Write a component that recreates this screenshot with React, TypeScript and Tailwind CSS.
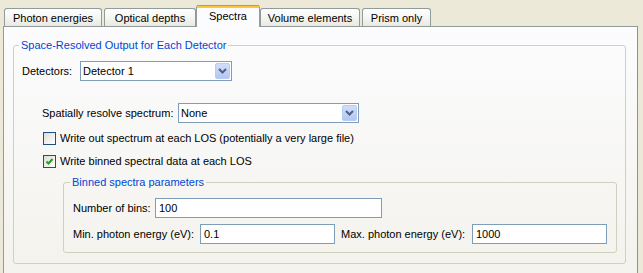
import React from "react";

function Tab({ label, className }: { label: string; className: string }) {
  return (
    <div
      className={`flex h-[18px] items-center justify-center rounded-t-[3px] border border-b-0 border-[#919b9c] bg-gradient-to-b from-[#fefefe] via-[#f6f6f2] to-[#e9e8e0] ${className}`}
    >
      {label}
    </div>
  );
}

function Chevron() {
  return (
    <svg width="9" height="6" viewBox="0 0 9 6">
      <path d="M1 1 L4.5 4.5 L8 1" fill="none" stroke="#4d6185" strokeWidth="2" />
    </svg>
  );
}

function Combo({ value, className }: { value: string; className: string }) {
  return (
    <div className={`flex h-[20px] items-stretch border border-[#7f9db9] bg-white ${className}`}>
      <div className="flex flex-1 items-center pl-[2px]">{value}</div>
      <div className="m-px flex w-[15px] items-center justify-center rounded-[2px] border border-[#b9cbf3] bg-gradient-to-b from-[#d2ddf9] to-[#b4c7f3]">
        <Chevron />
      </div>
    </div>
  );
}

function TextBox({ value, className }: { value: string; className: string }) {
  return (
    <div className={`flex h-[20px] items-center border border-[#7f9db9] bg-white pl-[3px] ${className}`}>
      {value}
    </div>
  );
}

function CheckBox({ checked }: { checked: boolean }) {
  return (
    <div className="flex h-[13px] w-[13px] items-center justify-center border border-[#1c5180] bg-gradient-to-br from-[#dcdcd7] to-[#ffffff]">
      {checked && (
        <svg width="9" height="9" viewBox="0 0 9 9">
          <path d="M1.5 4.5 L3.5 6.5 L7.5 2" fill="none" stroke="#21a121" strokeWidth="2" />
        </svg>
      )}
    </div>
  );
}

export default function App() {
  return (
    <div className="h-[273px] w-[643px] overflow-hidden bg-[#ece9d8] text-[11px] leading-[14px] text-black [font-family:'Liberation_Sans',Arial,sans-serif]">
      {/* tab strip */}
      <div className="flex h-[26px] items-end">
        <Tab label="Photon energies" className="ml-[4px] w-[98px]" />
        <Tab label="Optical depths" className="ml-[2px] w-[92px]" />
        <div className="relative z-10 -mb-px flex h-[22px] w-[64px] flex-col rounded-t-[3px] border-x border-[#919b9c] bg-[#fcfcfe]">
          <div className="h-px rounded-t-[3px] bg-[#e68b2c]" />
          <div className="h-[2px] bg-[#ffc73c]" />
          <div className="flex flex-1 items-center justify-center pb-[3px]">Spectra</div>
        </div>
        <Tab label="Volume elements" className="w-[100px]" />
        <Tab label="Prism only" className="ml-[2px] w-[69px]" />
      </div>

      {/* tab body */}
      <div className="ml-[3px] h-[260px] w-[635px] border border-[#919b9c] border-r-[#8f9293] bg-gradient-to-b from-[#fcfcfe] to-[#f3f2ec] pl-[9px] pt-[11px]">
        <fieldset className="w-[613px] rounded-[3px] border border-[#d0d0bf] pb-[10px] pl-[8px]">
          <legend className="-ml-[3px] px-[2px] text-[#0046d5]">Space-Resolved Output for Each Detector</legend>

          <div className="mt-[9px] flex h-[20px] items-center">
            <span className="w-[58px]">Detectors:</span>
            <Combo value="Detector 1" className="w-[152px]" />
          </div>

          <div className="ml-[20px] mt-[22px] flex h-[20px] items-center">
            <span className="w-[136px]">Spatially resolve spectrum:</span>
            <Combo value="None" className="w-[181px]" />
          </div>

          <div className="ml-[21px] mt-[7px] flex h-[16px] items-center gap-[4px]">
            <CheckBox checked={false} />
            <span>Write out spectrum at each LOS (potentially a very large file)</span>
          </div>

          <div className="ml-[21px] mt-[7px] flex h-[16px] items-center gap-[4px]">
            <CheckBox checked={true} />
            <span>Write binned spectral data at each LOS</span>
          </div>

          <fieldset className="ml-[41px] mt-[6px] w-[554px] rounded-[3px] border border-[#d0d0bf] pb-[8px] pl-[9px]">
            <legend className="-ml-[3px] px-[2px] text-[#0046d5]">Binned spectra parameters</legend>

            <div className="mt-[9px] flex h-[20px] items-center">
              <span className="w-[82px]">Number of bins:</span>
              <TextBox value="100" className="w-[227px]" />
            </div>

            <div className="mt-[6px] flex h-[20px] items-center">
              <span className="w-[127px]">Min. photon energy (eV):</span>
              <TextBox value="0.1" className="w-[135px]" />
              <span className="ml-[6px] w-[131px]">Max. photon energy (eV):</span>
              <TextBox value="1000" className="w-[135px]" />
            </div>
          </fieldset>
        </fieldset>
      </div>
    </div>
  );
}
